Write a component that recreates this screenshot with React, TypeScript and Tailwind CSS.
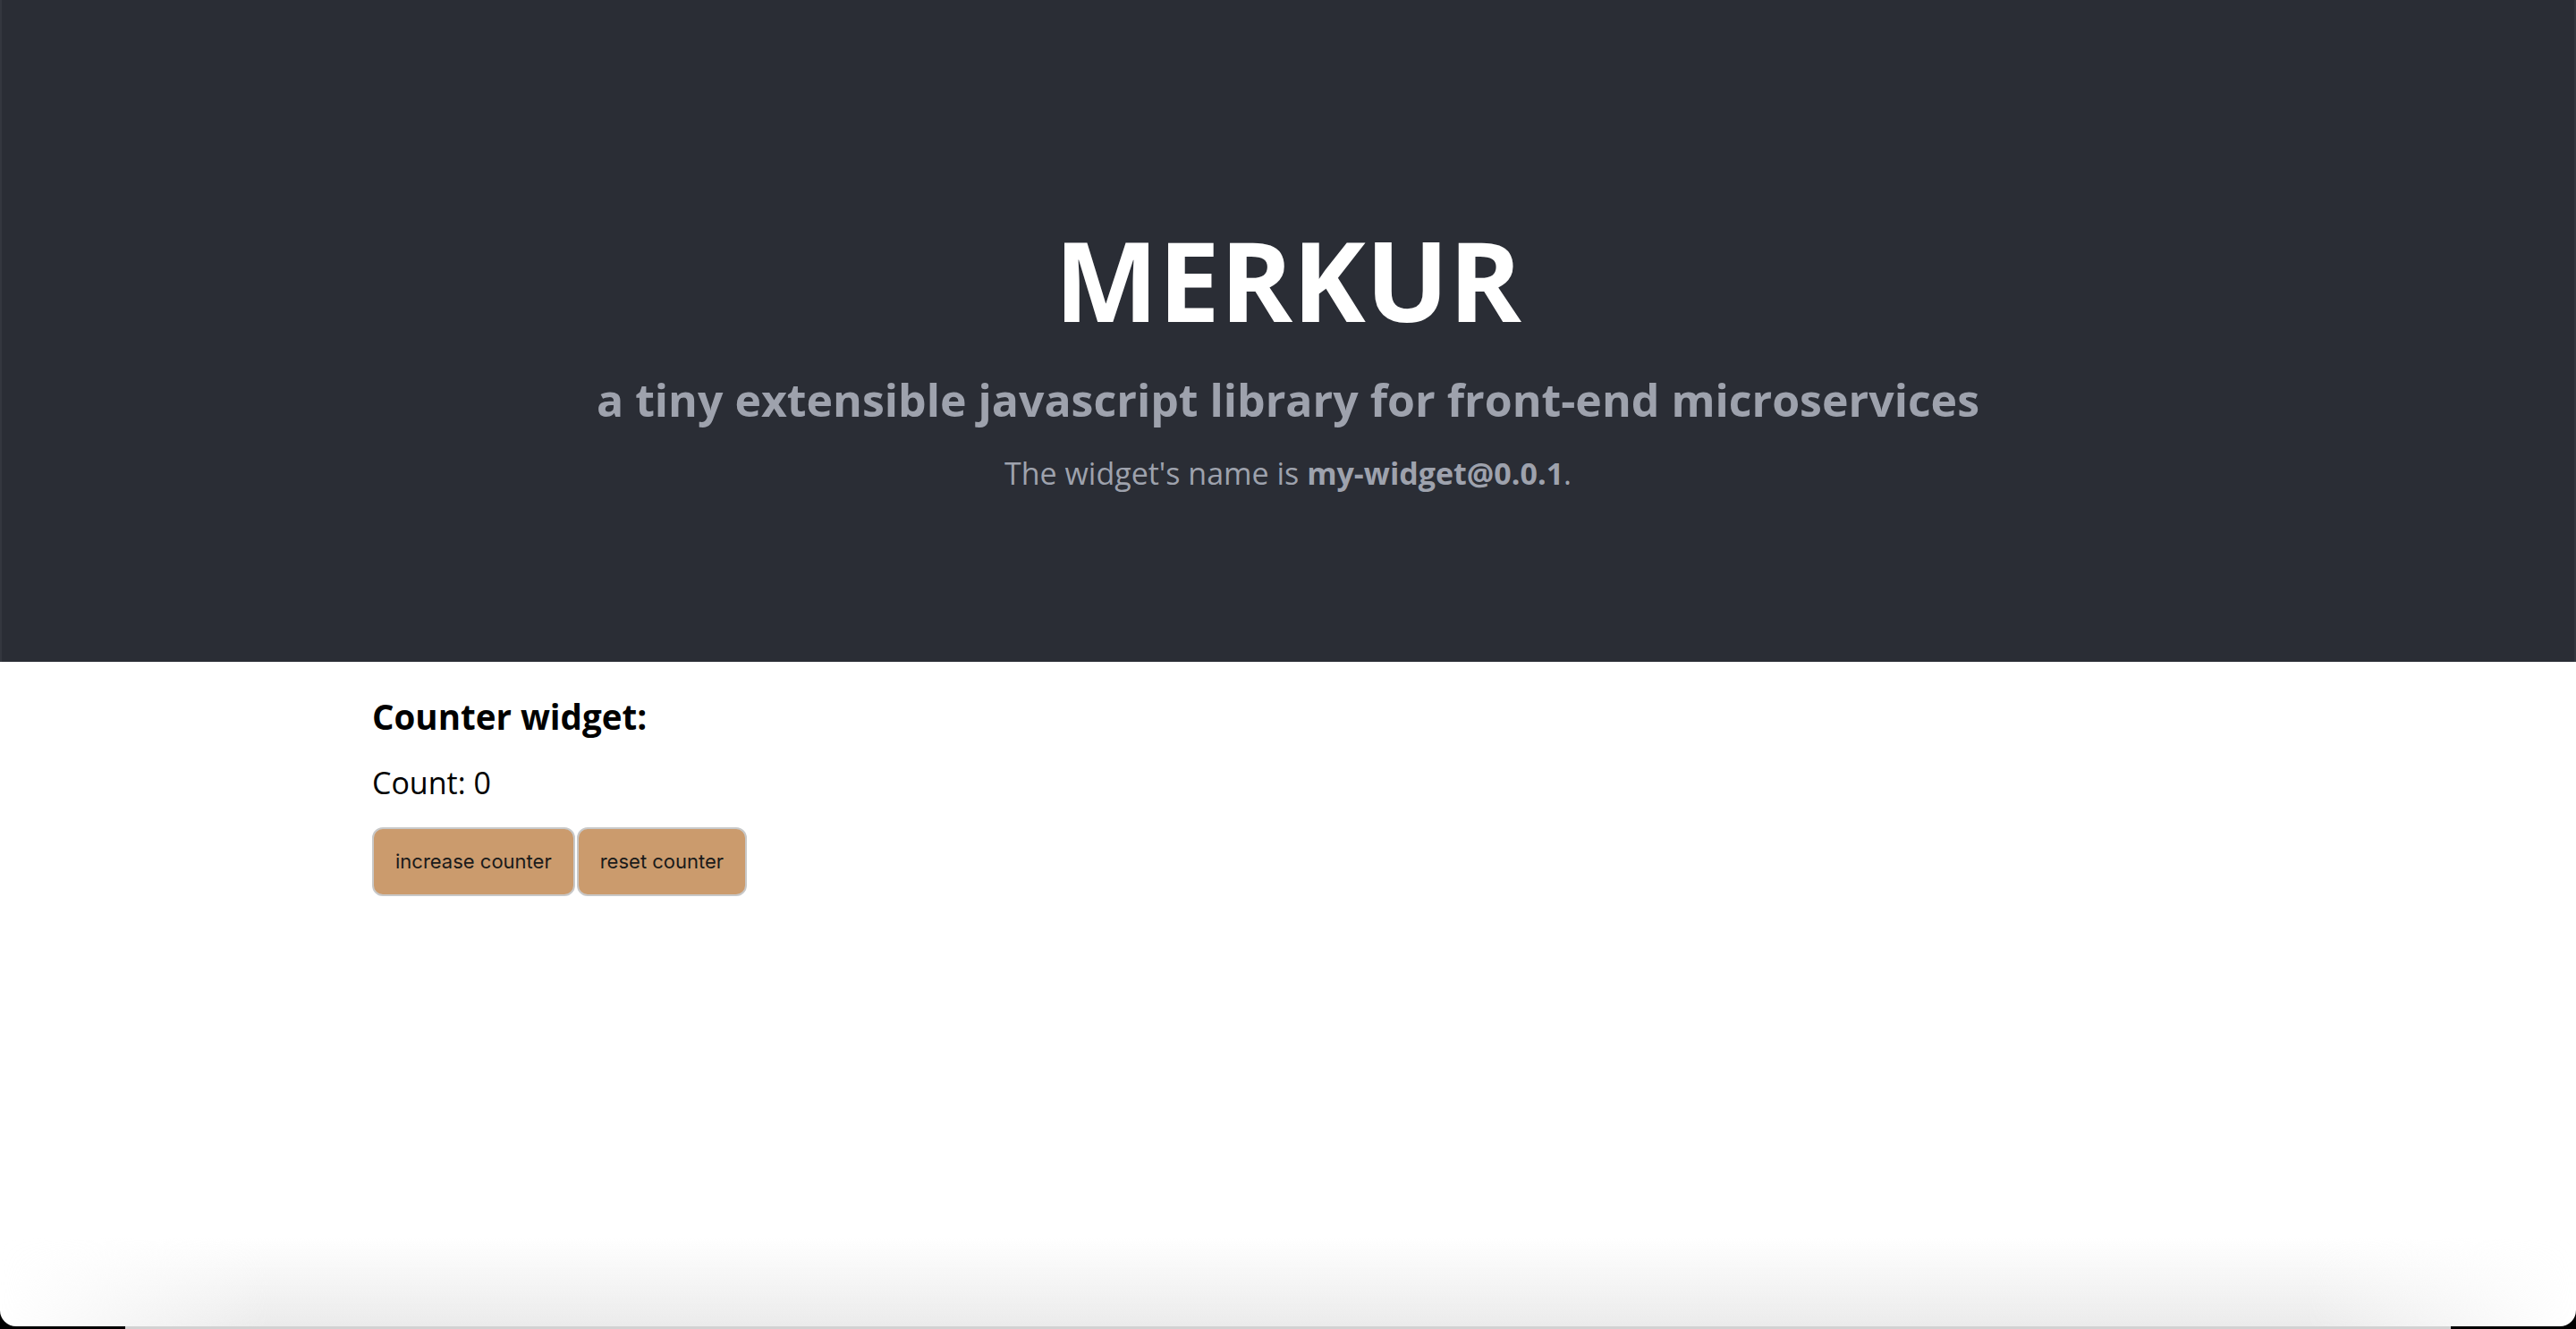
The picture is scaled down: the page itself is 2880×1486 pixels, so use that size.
import React, { useState } from "react";

export default function App() {
  const [count, setCount] = useState(0);
  return (
    <div className="relative min-h-[1486px] bg-black overflow-hidden">
      <div className="min-h-[1483px] bg-white rounded-b-[18px] overflow-hidden font-['Open_Sans',sans-serif]">
        <header className="h-[740px] bg-[#2a2d35] flex flex-col items-center pt-[251px] border-x-2 border-[#34373f]">
          <h1 className="text-white font-bold text-[123px] leading-[123px] m-0">MERKUR</h1>
          <h2 className="mt-[43px] text-[#9ea2ad] font-bold text-[50px] leading-[60px]">
            a tiny extensible javascript library for front-end microservices
          </h2>
          <p className="mt-[30px] text-[#9ea2ad] text-[34px] leading-[44px]">
            The widget&apos;s name is <strong className="font-bold">my-widget@0.0.1</strong>.
          </p>
        </header>
        <main className="pl-[416px] pt-[33px]">
          <h3 className="font-bold text-[38.5px] leading-[56px] text-black">Counter widget:</h3>
          <p className="mt-[23px] text-[34px] leading-[46px] text-black">Count: {count}</p>
          <div className="mt-[27px] flex gap-[2px]">
            <button
              onClick={() => setCount(count + 1)}
              className="h-[77px] px-[24px] bg-[#cb9b6d] border-2 border-[#c8c8c8] rounded-[12px] font-['Inter',sans-serif] text-[22px] text-[#1a1a1a]"
            >
              increase counter
            </button>
            <button
              onClick={() => setCount(0)}
              className="h-[77px] px-[24px] bg-[#cb9b6d] border-2 border-[#c8c8c8] rounded-[12px] font-['Inter',sans-serif] text-[22px] text-[#1a1a1a]"
            >
              reset counter
            </button>
          </div>
        </main>
      </div>
      <div className="pointer-events-none absolute left-0 right-0 bottom-[3px] h-[100px] rounded-b-[18px] bg-gradient-to-b from-transparent to-[#ebebeb] [mask-image:linear-gradient(to_right,transparent_0px,black_300px,black_calc(100%-300px),transparent_100%)]"></div>
      <div className="absolute bottom-0 left-[140px] right-[140px] h-[3px] bg-[#d2d2d2]"></div>
    </div>
  );
}
